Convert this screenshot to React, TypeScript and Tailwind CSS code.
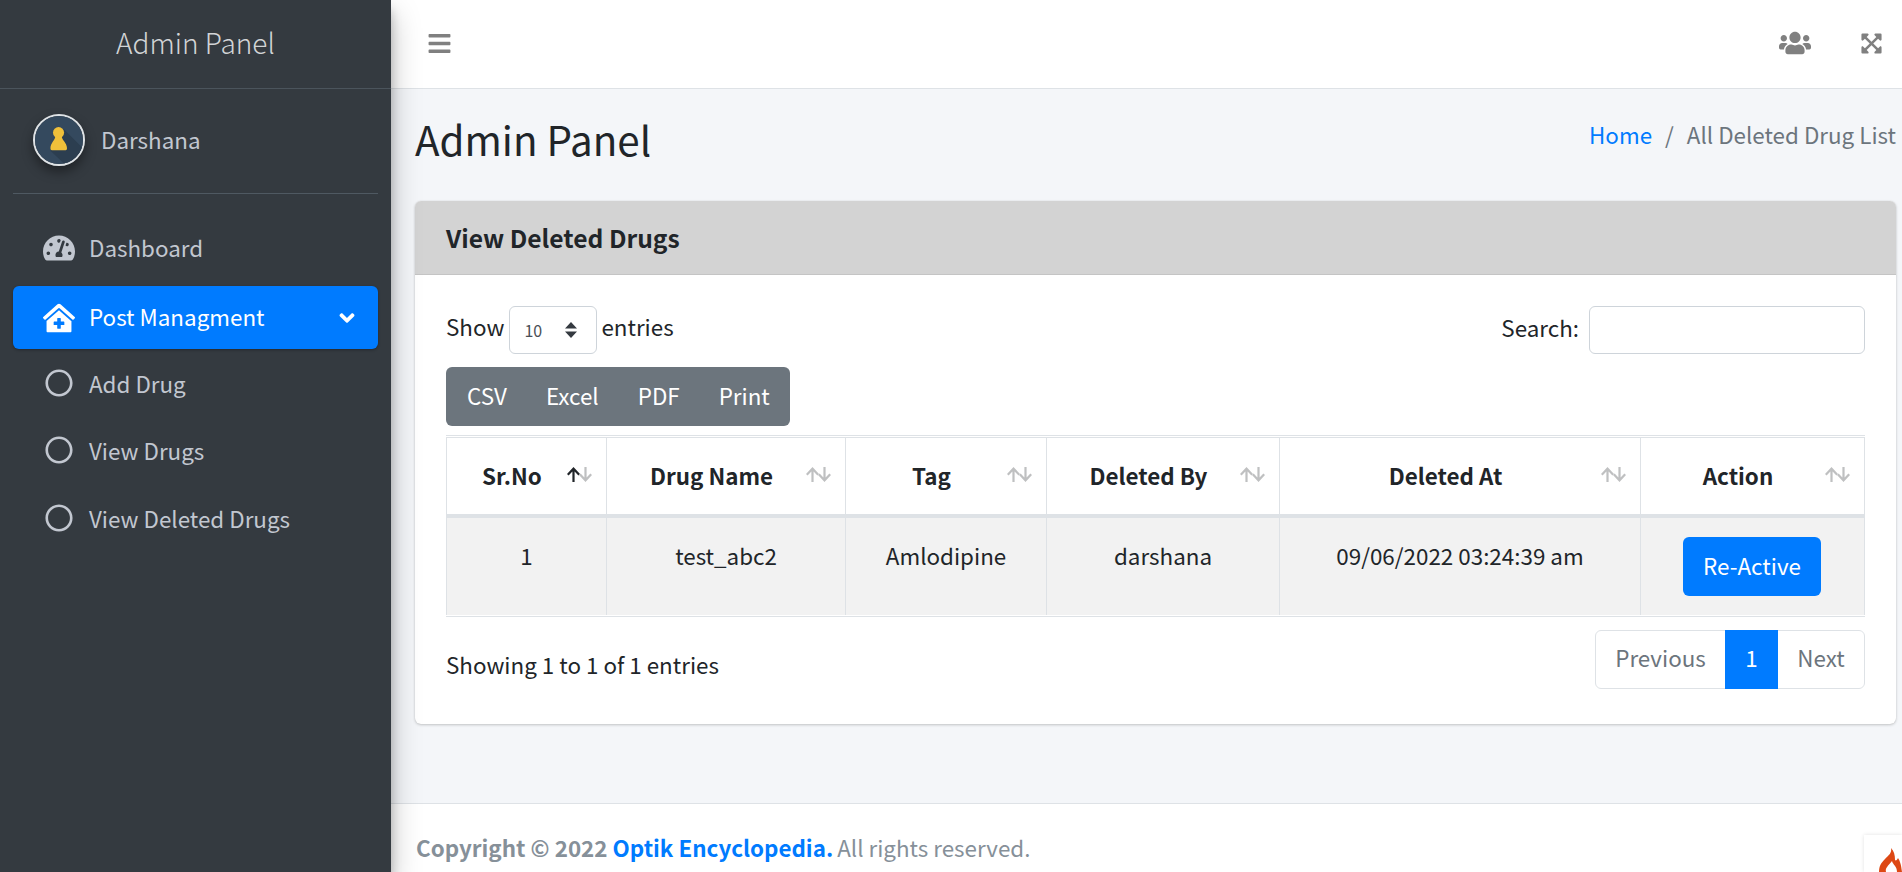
import { FaAngleDown, FaBars, FaClinicMedical, FaExpandArrowsAlt, FaRegCircle, FaTachometerAlt, FaUsers } from "react-icons/fa";

const columns = [
  { label: "Sr.No", width: "w-[160px]", value: "1", active: true },
  { label: "Drug Name", width: "w-[239px]", value: "test_abc2" },
  { label: "Tag", width: "w-[201px]", value: "Amlodipine" },
  { label: "Deleted By", width: "w-[233px]", value: "darshana" },
  { label: "Deleted At", width: "w-[361px]", value: "09/06/2022 03:24:39 am" },
  { label: "Action", width: "w-[224px]", value: "" },
];

function Avatar() {
  return (
    <div className="w-[52px] h-[52px] rounded-full border-2 border-[#dfe3e6] shadow-[0_6px_12px_rgba(0,0,0,0.4)] overflow-hidden shrink-0">
      <svg viewBox="0 0 52 52" className="w-full h-full">
        <rect width="52" height="52" fill="#34495e" />
        <path d="M31 14 L52 35 V52 H32 L17 38 Z" fill="#2c3e50" />
        <circle cx="25.5" cy="18" r="6" fill="#f0c03a" />
        <path d="M22 22 h7 c0 4 5.5 7 5.7 13 q0 2 -1.5 2 h-15 q-1.5 0 -1.5 -2 c.2 -6 5.3 -9 5.3 -13 Z" fill="#f0c03a" />
      </svg>
    </div>
  );
}

function SortArrows({ active }: { active?: boolean }) {
  const arrow = "M6.5 0 L13 7 L11.4 8.4 L7.6 4.4 V15 H5.4 V4.4 L1.6 8.4 L0 7 Z";
  return (
    <svg viewBox="0 0 25 15" className="absolute right-[14px] top-[29px] w-[25px] h-[15px]">
      <path d={arrow} fill={active ? "#212529" : "#bfc0c1"} />
      <path d={arrow} fill="#bfc0c1" transform="translate(25 15) rotate(180)" />
    </svg>
  );
}

function Sidebar() {
  return (
    <aside className="w-[391px] h-full shrink-0 bg-[#343a40] text-[#c2c7d0] shadow-[0_14px_28px_rgba(0,0,0,0.25),0_10px_10px_rgba(0,0,0,0.22)] z-10">
      <div className="h-[89px] border-b border-[#4b545c] flex items-center justify-center text-[28px] leading-none font-light text-[#d2d4d6] pb-[4px]">
        Admin Panel
      </div>
      <div className="mx-[13px] h-[105px] border-b border-[#4f5962] flex items-center pl-[20px] gap-[16px] text-[22.4px] pb-[3px]">
        <Avatar />
        <span>Darshana</span>
      </div>
      <nav className="px-[13px] pt-[20px] text-[22.4px]">
        <a className="h-[68px] mb-[4px] flex items-center pl-[30px] gap-[14px]">
          <FaTachometerAlt className="w-[32px] h-[32px]" />
          <span>Dashboard</span>
        </a>
        <a className="h-[63px] flex items-center pl-[30px] pr-[19px] gap-[14px] bg-[#007bff] text-white rounded-[6px] shadow-[0_1px_3px_rgba(0,0,0,0.3)]">
          <FaClinicMedical className="w-[32px] h-[32px]" />
          <span className="-translate-y-px">Post Managment</span>
          <FaAngleDown className="w-[24px] h-[24px] ml-auto" />
        </a>
        {["Add Drug", "View Drugs", "View Deleted Drugs"].map((item) => (
          <a key={item} className="h-[67.5px] flex items-center pl-[32px] gap-[16px]">
            <FaRegCircle className="w-[28px] h-[28px]" />
            <span className="translate-y-px">{item}</span>
          </a>
        ))}
      </nav>
    </aside>
  );
}

function DrugTable() {
  return (
    <div className="border-y border-[#dee2e6] py-px">
      <table className="w-[1418px] table-fixed border-collapse text-[22.4px] text-[#212529]">
        <thead>
          <tr className="h-[78px]">
            {columns.map((col) => (
              <th key={col.label} className={`${col.width} relative border border-[#dee2e6] border-b-4 font-bold text-center pr-[29px]`}>
                {col.label}
                <SortArrows active={col.active} />
              </th>
            ))}
          </tr>
        </thead>
        <tbody>
          <tr className="h-[99px] bg-[#f2f2f2]">
            {columns.map((col) => (
              <td key={col.label} className="border border-[#dee2e6] border-b-0 text-center align-top pt-[21px]">
                {col.label === "Action" ? (
                  <button className="-mt-[2px] block ml-[42px] w-[138px] h-[59px] bg-[#007bff] text-white rounded-[6px]">Re-Active</button>
                ) : (
                  col.value
                )}
              </td>
            ))}
          </tr>
        </tbody>
      </table>
    </div>
  );
}

function Card() {
  return (
    <section className="ml-[24px] w-[1481px] h-[523px] bg-white rounded-[6px] shadow-[0_0_1px_rgba(0,0,0,0.13),0_1px_3px_rgba(0,0,0,0.2)] overflow-hidden">
      <div className="h-[74px] bg-[#d3d3d3] border-b border-[#c4c4c4] flex items-center px-[31px] text-[24.6px] font-bold text-[#212529]">
        View Deleted Drugs
      </div>
      <div className="px-[31px] pt-[31px]">
        <div className="flex justify-between items-center h-[48px] text-[22.4px] text-[#212529]">
          <div className="flex items-center gap-[5px]">
            <span className="-translate-y-[3px]">Show</span>
            <div className="w-[88px] h-[48px] border border-[#ced4da] rounded-[6px] flex items-center justify-between pl-[14px] pr-[18px] text-[16px] text-[#495057]">
              <span>10</span>
              <svg viewBox="0 0 14 18" className="w-[14px] h-[18px]" fill="#343a40">
                <path d="M7 1 L13 7.5 H1 Z M7 17 L13 10.5 H1 Z" />
              </svg>
            </div>
            <span className="-ml-px -translate-y-[3px]">entries</span>
          </div>
          <div className="flex items-center gap-[10px]">
            <span className="-translate-y-[2px]">Search:</span>
            <div className="w-[276px] h-[48px] border border-[#ced4da] rounded-[6px]" />
          </div>
        </div>
        <div className="mt-[13px] w-[344px] h-[59px] bg-[#6c757d] rounded-[6px] flex items-center pl-[21px] gap-[39px] text-[22.4px] text-white pb-[2px]">
          <span>CSV</span>
          <span>Excel</span>
          <span>PDF</span>
          <span>Print</span>
        </div>
        <div className="mt-[9px]">
          <DrugTable />
        </div>
        <div className="flex justify-between mt-[13px] text-[22.4px]">
          <span className="mt-[18px] text-[#212529]">Showing 1 to 1 of 1 entries</span>
          <div className="flex h-[59px] border border-[#dee2e6] rounded-[6px] items-stretch text-[#6c757d]">
            <span className="w-[129px] flex items-center justify-center pb-[2px]">Previous</span>
            <span className="w-[53px] -my-px flex items-center justify-center bg-[#007bff] text-white pb-[2px]">1</span>
            <span className="w-[86px] flex items-center justify-center pb-[2px]">Next</span>
          </div>
        </div>
      </div>
    </section>
  );
}

export default function App() {
  return (
    <div className="relative h-[872px] flex overflow-hidden bg-[#f4f6f9] font-['Noto_Sans_CJK_SC','Liberation_Sans',sans-serif]">
      <Sidebar />
      <main className="flex-1 min-w-0 flex flex-col">
        <header className="h-[89px] shrink-0 bg-white border-b border-[#dee2e6] flex items-center pl-[36px] pr-[19px] pb-[2px] text-[#808080]">
          <FaBars className="w-[25px] h-[25px]" />
          <FaUsers className="w-[32px] h-[26px] ml-auto" />
          <FaExpandArrowsAlt className="w-[23px] h-[23px] ml-[49px]" />
        </header>
        <div className="flex-1">
          <div className="h-[112px] flex justify-between pl-[24px] pr-[6px]">
            <h1 className="text-[40.3px] leading-none text-[#212529] mt-[30px]">Admin Panel</h1>
            <div className="text-[22.4px] mt-[29px] text-[#6c757d]">
              <span className="text-[#007bff]">Home</span>
              <span className="mx-[13px]">/</span>
              <span>All Deleted Drug List</span>
            </div>
          </div>
          <Card />
        </div>
        <footer className="h-[69px] shrink-0 bg-white border-t border-[#dee2e6] flex items-center pl-[25px] pt-[20px] text-[22.4px] text-[#869099]">
          <b>Copyright © 2022 <span className="text-[#007bff]">Optik Encyclopedia.</span></b>
          <span className="ml-[4px]">All rights reserved.</span>
        </footer>
      </main>
      <div className="absolute right-0 bottom-0 w-[38px] h-[37px] bg-white shadow-[0_0_4px_rgba(0,0,0,0.12)]">
        <svg viewBox="0 0 38 37" className="w-[38px] h-[37px]" fill="#dd4814">
          <path d="M27 13 C28 18 25 20 21 24 C17 28 15 31 15 37 H22 C21 33 24 31 28 26 C29 30 33 31 33 37 H38 C37 29 36 26 34 23 C33 25 32 26 31 25 C31 20 30 16 27 13 Z" />
        </svg>
      </div>
    </div>
  );
}
